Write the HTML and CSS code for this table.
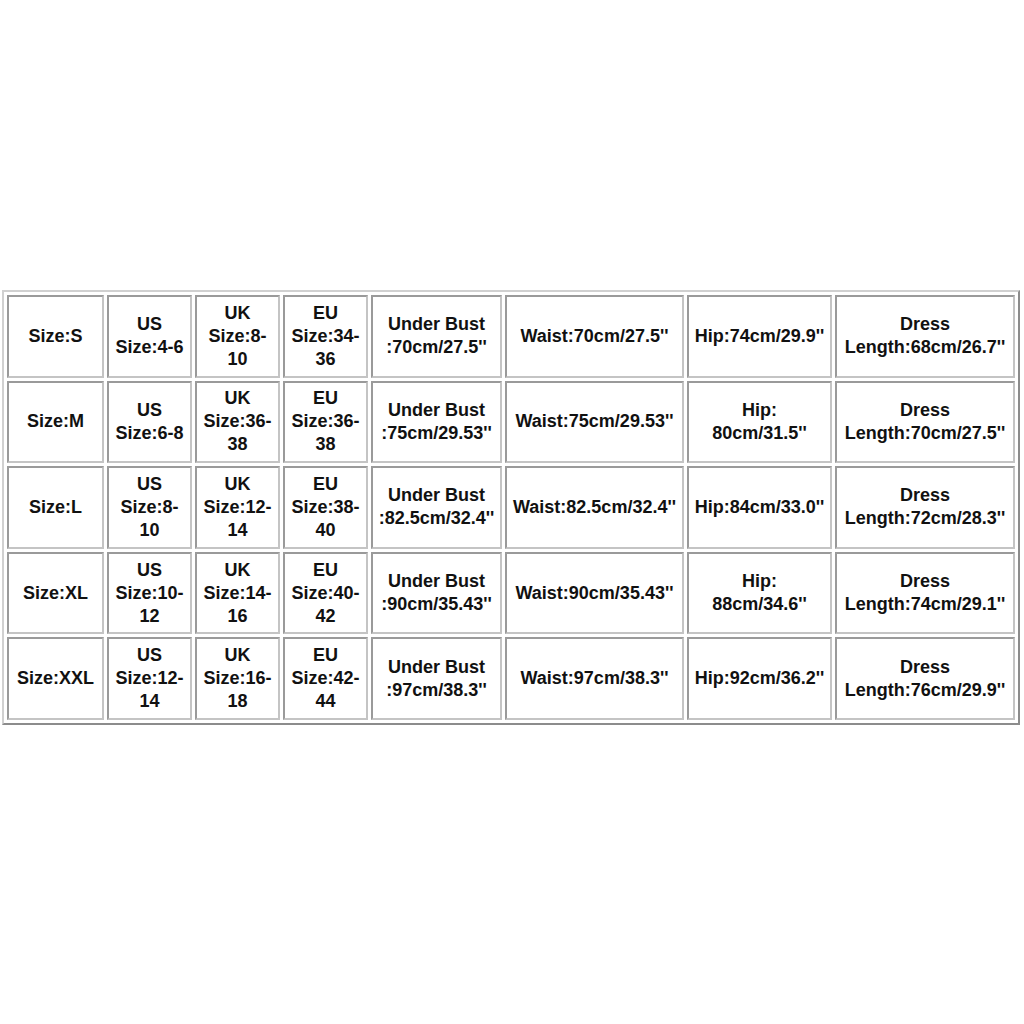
FILE: index.html
```html
<!DOCTYPE html>
<html>
<head>
<meta charset="utf-8">
<link rel="stylesheet" href="styles.css">
</head>
<body>
<div class="page">
<table class="size-chart">
<tr>
<td class="c1">Size:S</td>
<td class="c2">US Size:4-6</td>
<td class="c3">UK Size:8-<wbr>10</td>
<td class="c4">EU Size:34-<wbr>36</td>
<td class="c5">Under Bust :70cm/27.5''</td>
<td class="c6">Waist:70cm/27.5''</td>
<td class="c7">Hip:74cm/29.9''</td>
<td class="c8">Dress Length:68cm/26.7''</td>
</tr>
<tr>
<td>Size:M</td>
<td>US Size:6-8</td>
<td>UK Size:36-<wbr>38</td>
<td>EU Size:36-<wbr>38</td>
<td>Under Bust :75cm/29.53''</td>
<td>Waist:75cm/29.53''</td>
<td>Hip: 80cm/31.5''</td>
<td>Dress Length:70cm/27.5''</td>
</tr>
<tr>
<td>Size:L</td>
<td>US Size:8-<wbr>10</td>
<td>UK Size:12-<wbr>14</td>
<td>EU Size:38-<wbr>40</td>
<td>Under Bust :82.5cm/32.4''</td>
<td>Waist:82.5cm/32.4''</td>
<td>Hip:84cm/33.0''</td>
<td>Dress Length:72cm/28.3''</td>
</tr>
<tr>
<td>Size:XL</td>
<td>US Size:10-<wbr>12</td>
<td>UK Size:14-<wbr>16</td>
<td>EU Size:40-<wbr>42</td>
<td>Under Bust :90cm/35.43''</td>
<td>Waist:90cm/35.43''</td>
<td>Hip: 88cm/34.6''</td>
<td>Dress Length:74cm/29.1''</td>
</tr>
<tr>
<td>Size:XXL</td>
<td>US Size:12-<wbr>14</td>
<td>UK Size:16-<wbr>18</td>
<td>EU Size:42-<wbr>44</td>
<td>Under Bust :97cm/38.3''</td>
<td>Waist:97cm/38.3''</td>
<td>Hip:92cm/36.2''</td>
<td>Dress Length:76cm/29.9''</td>
</tr>
</table>
</div>
</body>
</html>
```
FILE: styles.css
```css
html, body {
  margin: 0;
  padding: 0;
  background: #ffffff;
}
.page {
  width: 1024px;
  height: 1024px;
  padding: 290px 0 0 2px;
  box-sizing: border-box;
}
.size-chart {
  table-layout: fixed;
  border-collapse: separate;
  border-spacing: 3px;
  border: 2px solid;
  border-color: #d0d0d0 #8c8c8c #8c8c8c #d0d0d0;
  font-family: "Liberation Sans", Arial, sans-serif;
  font-weight: bold;
  font-size: 18px;
  line-height: 23px;
  color: #111111;
}
.size-chart td {
  box-sizing: border-box;
  height: 82.6px;
  padding: 0 5px;
  text-align: center;
  vertical-align: middle;
  border: 2px solid;
  border-color: #9a9a9a #c4c4c4 #c4c4c4 #9a9a9a;
}
.size-chart .c1 { width: 97px; }
.size-chart .c2 { width: 85px; }
.size-chart .c3 { width: 85px; }
.size-chart .c4 { width: 85px; }
.size-chart .c5 { width: 131px; }
.size-chart .c6 { width: 179px; }
.size-chart .c7 { width: 145px; }
.size-chart .c8 { width: 180px; }
```
